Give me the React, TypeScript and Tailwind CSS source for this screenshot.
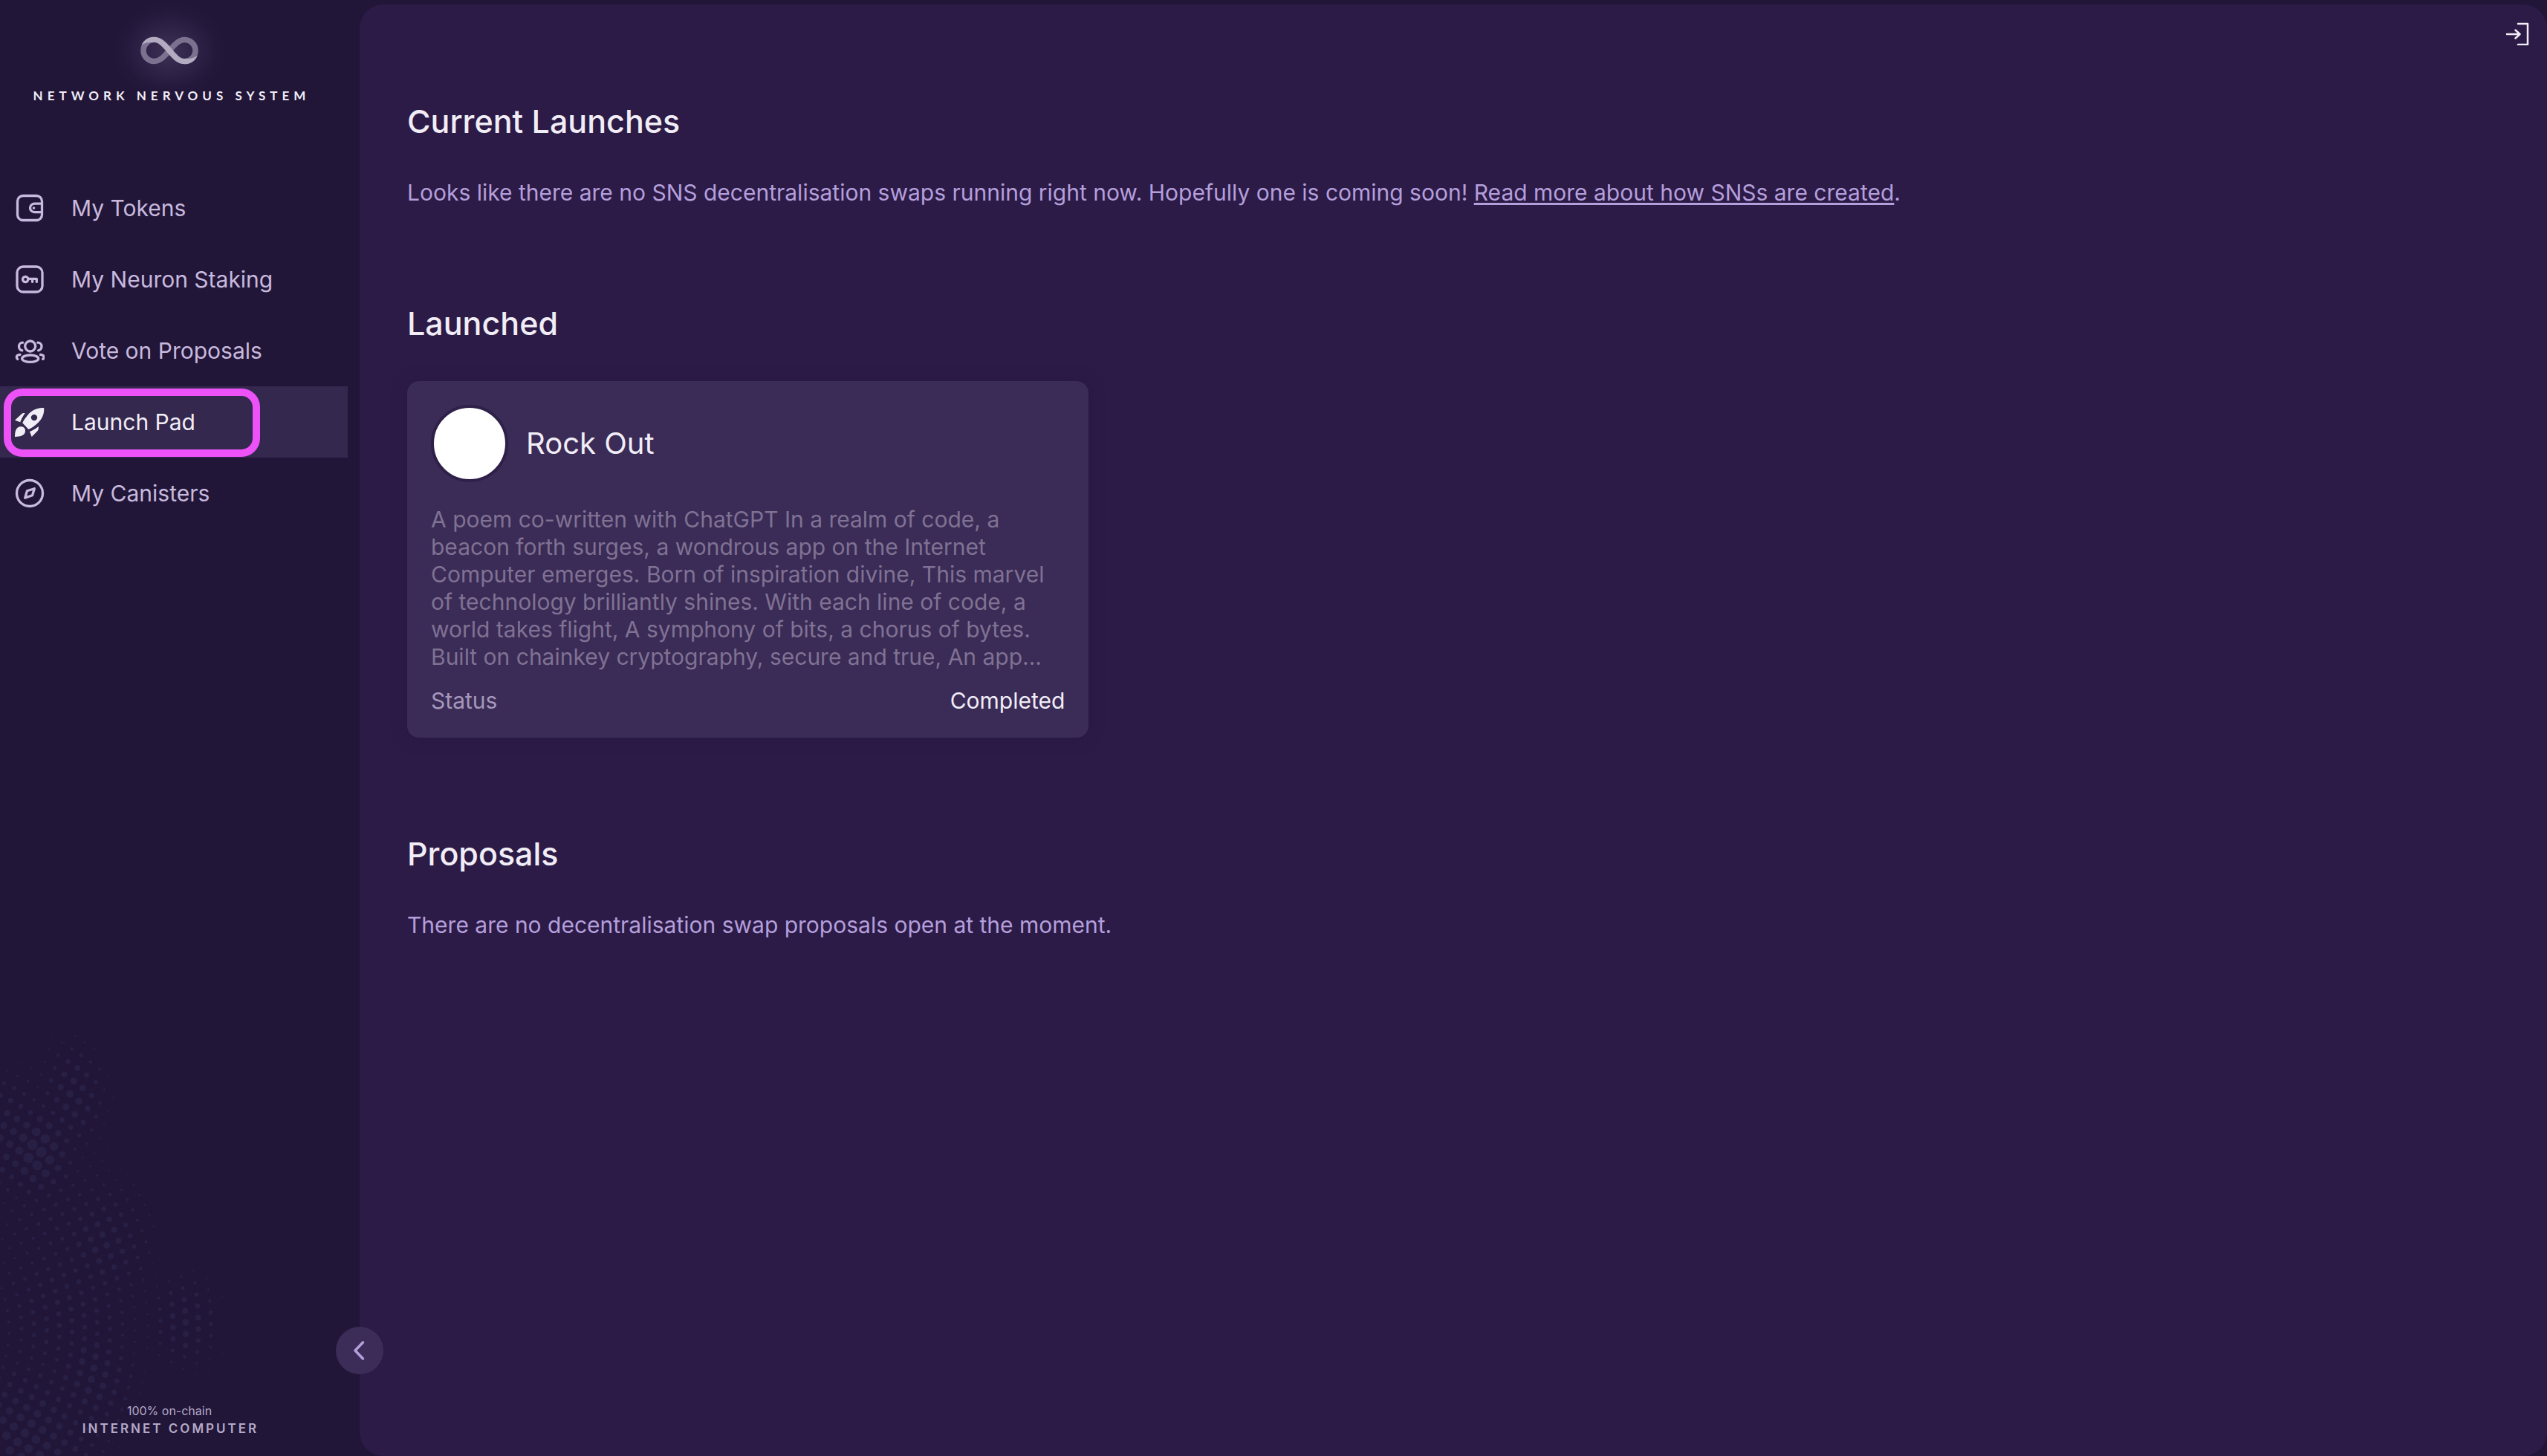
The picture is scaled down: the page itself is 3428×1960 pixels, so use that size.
import React from "react";

type Dot = { x: number; y: number; r: number };

const CLUSTERS = [
  { x: 50, y: 1550, sx: 32, sy: 42, r: 7.5 },
  { x: 8, y: 1530, sx: 40, sy: 60, r: 5 },
  { x: 98, y: 1475, sx: 30, sy: 50, r: 5 },
  { x: 138, y: 1675, sx: 46, sy: 60, r: 4.5 },
  { x: 250, y: 1778, sx: 34, sy: 44, r: 4.5 },
  { x: 90, y: 1760, sx: 80, sy: 90, r: 3.5 },
  { x: 80, y: 1640, sx: 70, sy: 80, r: 2.8 },
  { x: 124, y: 1855, sx: 40, sy: 60, r: 5 },
  { x: 30, y: 1945, sx: 75, sy: 80, r: 6 },
];

function buildDots(): Dot[] {
  const dots: Dot[] = [];
  for (let ring = 4; ring < 28; ring++) {
    const radius = 27 + ring * 17;
    const step = 15.5 / radius;
    for (let a = -1.3; a < 0.8; a += step) {
      const x = -151 + radius * Math.cos(a);
      const y = 1790 + radius * Math.sin(a);
      if (x < -8 || x > 300 || y < 1290 || y > 1968) continue;
      let r = 0;
      for (const c of CLUSTERS) {
        const d = ((x - c.x) / c.sx) ** 2 + ((y - c.y) / c.sy) ** 2;
        r = Math.max(r, c.r * Math.exp(-d / 2));
      }
      if (r > 0.7) dots.push({ x, y: y - 1280, r });
    }
  }
  return dots;
}

const DOTS = buildDots();

const Halftone = () => (
  <svg className="pointer-events-none absolute bottom-0 left-0 h-[680px] w-[484px]" viewBox="0 0 484 680" fill="#281f45" aria-hidden="true">
    {DOTS.map((d, i) => (
      <circle key={i} cx={d.x.toFixed(1)} cy={d.y.toFixed(1)} r={d.r.toFixed(1)} />
    ))}
  </svg>
);

const iconProps = {
  className: "size-10 shrink-0",
  viewBox: "0 0 40 40",
  fill: "none",
  stroke: "currentColor",
  strokeWidth: 3.3,
  strokeLinecap: "round" as const,
  strokeLinejoin: "round" as const,
  "aria-hidden": true,
};

const WalletIcon = () => (
  <svg {...iconProps}>
    <rect x="3.5" y="3.5" width="33" height="33" rx="7.5" />
    <path d="M36 14.2H26.5a6 5.7 0 0 0 0 11.4H36" />
    <circle cx="25.5" cy="20" r="1.8" fill="currentColor" stroke="none" />
  </svg>
);

const KeyIcon = () => (
  <svg {...iconProps}>
    <rect x="3" y="3" width="34" height="34" rx="8" />
    <circle cx="14.2" cy="20" r="3.7" />
    <path d="M18.5 19.3H29.3V23.4M23.6 20V23.4" />
  </svg>
);

const PeopleIcon = () => (
  <svg {...iconProps}>
    <circle cx="20.7" cy="14" r="7" />
    <ellipse cx="20.7" cy="30.7" rx="11" ry="4.7" />
    <path d="M10.6 9.2C7.6 9.2 5.5 11.5 5.5 14.3S7.4 19.4 9.8 19.8" />
    <path d="M30.8 9.2C33.8 9.2 36 11.5 36 14.3S34 19.4 31.6 19.8" />
    <path d="M7 25.4C4.2 25.5 2.3 27 2.3 29C2.3 30 2.8 30.8 3.7 31.4" />
    <path d="M34.4 25.4C37.2 25.5 39.1 27 39.1 29C39.1 30 38.6 30.8 37.7 31.4" />
  </svg>
);

const RocketIcon = () => (
  <svg {...iconProps} fill="currentColor" stroke="none">
    <path
      fillRule="evenodd"
      d="M39.2 1.2C31 .5 23 4 17.5 10.5C14.5 14 12 17.5 10.2 21.2L18.4 30C22.5 28.2 26.5 25.5 30 22.2C36.5 16.5 39.8 9.5 39.2 1.2ZM26 9.9A4.2 4.2 0 1 1 26 18.3A4.2 4.2 0 0 1 26 9.9Z"
    />
    <path d="M13.8 8C12 7.8 10.2 8 8.8 9.4L0 17.8L7.3 20.2C8.8 16 10.9 12 13.8 8Z" />
    <path d="M31.8 26C32 28.5 31.9 30.5 30.6 31.9L22.7 40L20 33C24 31.4 28.2 29.2 31.8 26Z" />
    <path d="M0 40C0 33 1.5 26.3 8 26.3C12 26.3 14.3 29 14 32.5C13.5 38 8 39.8 0 40Z" />
  </svg>
);

const CompassIcon = () => (
  <svg {...iconProps}>
    <circle cx="20" cy="20" r="17.5" />
    <path d="M26.3 13.7L16.5 16.8L13.7 26.3L23.6 22.8Z" />
  </svg>
);

const InfinityLogo = () => (
  <svg className="h-[38px] w-20" viewBox="0 0 80 38" fill="none" strokeWidth="7.5" aria-hidden="true">
    <path
      stroke="#7d7190"
      d="M40 19C33 27 27.5 33.5 19.5 33.5C11.5 33.5 5 27 5 19C5 11 11.5 4.5 19.5 4.5M40 19C47 11 52.5 4.5 60.5 4.5C68.5 4.5 75 11 75 19C75 27 68.5 33.5 60.5 33.5"
    />
    <path
      fill="#b3abc0"
      d="M2.5 12C5 5 11.5 .7 19.5 .7C29 .7 35 7 43.5 17C51 26 55 30 60.5 30C67 30.4 73 29.5 77.5 26C75 33 68.5 37.3 60.5 37.3C51 37.3 45 31 36.5 21C29 12 25 8 19.5 8C13 7.6 6 8 2.5 12Z"
    />
  </svg>
);

const NAV = [
  { label: "My Tokens", Icon: WalletIcon },
  { label: "My Neuron Staking", Icon: KeyIcon },
  { label: "Vote on Proposals", Icon: PeopleIcon },
  { label: "Launch Pad", Icon: RocketIcon, active: true },
  { label: "My Canisters", Icon: CompassIcon },
];

const Sidebar = () => (
  <aside className="relative flex w-[484px] shrink-0 flex-col">
    <Halftone />
    <div className="relative flex w-[456px] flex-col items-center pt-[49px]">
      <div className="absolute top-0 h-[136px] w-[160px] bg-[radial-gradient(closest-side,#3f3156,#2b1f44_55%,#23183a_80%,#21163800)]" />
      <div className="relative">
        <InfinityLogo />
      </div>
      <p className="relative mt-8 pl-[6px] font-[Lato] text-[17px] leading-5 font-bold tracking-[6px] whitespace-nowrap text-[#f1edf6]">
        NETWORK NERVOUS SYSTEM
      </p>
    </div>
    <nav className="relative mt-[93px] flex flex-col pr-4">
      {NAV.map(({ label, Icon, active }) => (
        <a
          key={label}
          href="#"
          aria-current={active ? "page" : undefined}
          className={
            active
              ? "relative flex h-24 items-center gap-9 bg-[#34284f] pl-5 text-[#f1edf6]"
              : "relative flex h-24 items-center gap-9 pl-5 text-[#c8b9de]"
          }
        >
          <Icon />
          <span className="text-[30px] leading-10">{label}</span>
          {active && (
            <span className="absolute top-[3px] left-[5px] h-[92px] w-[345px] rounded-[25px] border-[10px] border-[#ec52f7]" />
          )}
        </a>
      ))}
    </nav>
    <footer className="relative mt-auto flex w-[456px] flex-col items-center pb-[25px] text-[#b5a9c8]">
      <p className="text-base leading-6">100% on-chain</p>
      <p className="pl-[3px] text-[17px] leading-6 font-semibold tracking-[3px]">INTERNET COMPUTER</p>
    </footer>
  </aside>
);

const Title = ({ children }: { children: React.ReactNode }) => (
  <h2 className="text-[43px] leading-14 font-medium text-[#f1edf6]">{children}</h2>
);

const POEM = [
  "A poem co-written with ChatGPT In a realm of code, a",
  "beacon forth surges, a wondrous app on the Internet",
  "Computer emerges. Born of inspiration divine, This marvel",
  "of technology brilliantly shines. With each line of code, a",
  "world takes flight, A symphony of bits, a chorus of bytes.",
  "Built on chainkey cryptography, secure and true, An app...",
];

const ProjectCard = () => (
  <article className="rounded-2xl bg-[#3b2b57] p-8 shadow-[0_0_16px_4px_#281a43]">
    <header className="flex items-center gap-6">
      <div className="size-26 rounded-full border-4 border-[#2e2049] bg-white" />
      <h3 className="text-[40px] leading-12 text-[#f1edf6]">Rock Out</h3>
    </header>
    <p className="mt-8 text-[30px] leading-[37px] text-[#7f7293]">
      {POEM.map((line) => (
        <span key={line} className="block whitespace-nowrap">
          {line}
        </span>
      ))}
    </p>
    <dl className="mt-[22px] flex justify-between text-[30px] leading-9">
      <dt className="text-[#a598ba]">Status</dt>
      <dd className="text-[#f1edf6]">Completed</dd>
    </dl>
  </article>
);

export default function App() {
  return (
    <div className="flex min-h-screen bg-[#211638] font-[Inter,sans-serif]">
      <Sidebar />
      <main className="relative mt-[6px] min-w-0 flex-1 rounded-[32px] bg-[#2c1b46] text-[30px] leading-10 text-[#b49fdc]">
        <button
          type="button"
          aria-label="Log in"
          className="absolute top-[23px] right-6 flex size-8 items-center justify-center text-[#f1edf6]"
        >
          <svg className="size-8" viewBox="0 0 32 32" fill="none" stroke="currentColor" strokeWidth="2.5" strokeLinecap="round" strokeLinejoin="round" aria-hidden="true">
            <path d="M17 3H30V31H17M2 17H19M13.5 11.5L19.5 17L13.5 22.5" />
          </svg>
        </button>
        <button
          type="button"
          aria-label="Collapse menu"
          className="absolute bottom-[110px] -left-8 flex size-16 items-center justify-center rounded-full bg-[#3c2c58] text-[#b49fdc]"
        >
          <svg className="size-7" viewBox="0 0 28 28" fill="none" stroke="currentColor" strokeWidth="3.5" strokeLinecap="round" strokeLinejoin="round" aria-hidden="true">
            <path d="M18.5 3L8 14L18.5 25" />
          </svg>
        </button>
        <div className="flex flex-col px-16 pt-[129px]">
          <section>
            <Title>Current Launches</Title>
            <p className="mt-12">
              Looks like there are no SNS decentralisation swaps running right now. Hopefully one is coming soon!{" "}
              <a href="#" className="underline decoration-[3px] underline-offset-[3px]">
                Read more about how SNSs are created
              </a>
              .
            </p>
          </section>
          <section className="mt-32">
            <Title>Launched</Title>
            <div className="mt-[50px] grid grid-cols-3 gap-8">
              <ProjectCard />
            </div>
          </section>
          <section className="mt-32">
            <Title>Proposals</Title>
            <p className="mt-12">There are no decentralisation swap proposals open at the moment.</p>
          </section>
        </div>
      </main>
    </div>
  );
}
